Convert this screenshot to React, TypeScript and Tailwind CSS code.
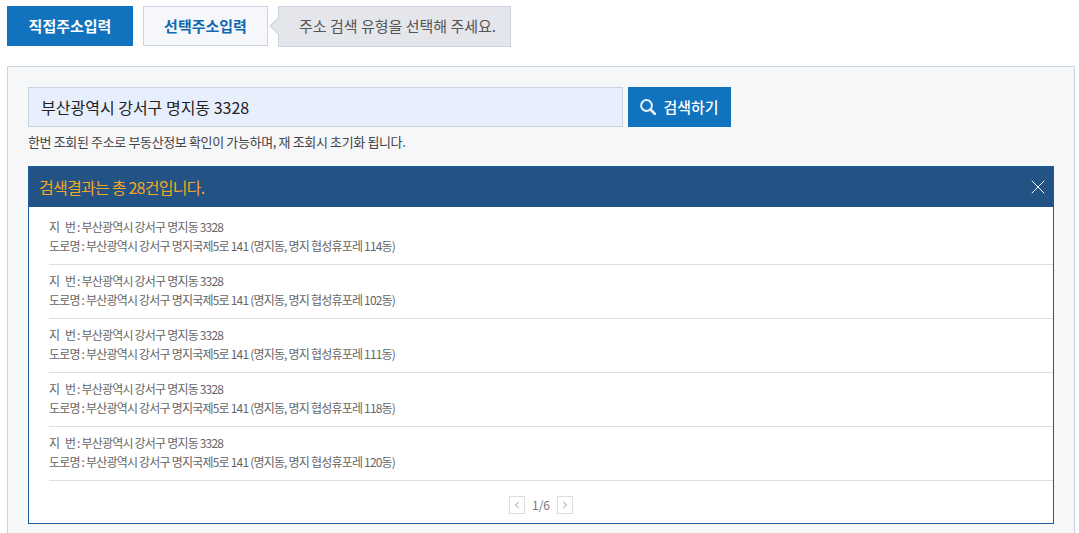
import { X, ChevronLeft, ChevronRight } from 'lucide-react';

const results = ['114', '102', '111', '118', '120'];

export default function App() {
  return (
    <div className="h-[533px] w-[1079px] overflow-hidden bg-white pl-[7px] pr-1 pt-[6px] font-['Noto_Sans_CJK_KR','Noto_Sans',sans-serif]">
      <div className="flex items-start">
        <button className="flex h-10 w-[126px] items-center justify-center bg-[#1172bd] text-[15px] font-bold text-white">
          직접주소입력
        </button>
        <button className="ml-[10px] flex h-10 w-[125px] items-center justify-center border border-[#ccd3e0] bg-[#f5f7fa] text-[15px] font-bold text-[#1168b0]">
          선택주소입력
        </button>
        <div className="relative ml-[10px] flex h-[41px] w-[233px] items-center border border-[#ccd3e0] bg-[#e4e6eb] pl-5 text-[15px] text-[#555]">
          주소 검색 유형을 선택해 주세요.
          <span className="absolute -left-[7px] top-[13px] h-3 w-3 rotate-45 border-b border-l border-[#ccd3e0] bg-[#e4e6eb]" />
        </div>
      </div>

      <div className="mt-[19px] h-[480px] border border-[#ccd3e0] bg-[#f5f7f9] px-5 pt-5">
        <div className="flex gap-[5px]">
          <div className="flex h-10 w-[595px] items-center border border-[#ccd3e0] bg-[#e8effc] pl-3 text-base text-[#222]">
            부산광역시 강서구 명지동 3328
          </div>
          <button className="flex h-10 w-[103px] items-center justify-center gap-[7px] bg-[#1172bd] text-[15px] font-medium text-white">
            <svg viewBox="0 0 16 16" className="h-4 w-4" fill="none" stroke="#e6f1fa">
              <circle cx="6.5" cy="6.5" r="5.4" strokeWidth="2" />
              <path d="M10.5 10.5L15 15" strokeWidth="2.6" strokeLinecap="round" />
            </svg>
            검색하기
          </button>
        </div>
        <p className="mt-[5px] text-[13px] leading-5 tracking-[-0.36px] text-[#444]">
          한번 조회된 주소로 부동산정보 확인이 가능하며, 재 조회시 초기화 됩니다.
        </p>

        <div className="mt-[14px] h-[358px] border border-[#1b5ba0] bg-white">
          <div className="flex h-10 items-center justify-between bg-[#235284] pl-[10px] pr-[3px]">
            <span className="text-base tracking-[-0.75px] text-[#f5a623]">검색결과는 총 28건입니다.</span>
            <X className="h-6 w-6 text-white" strokeWidth={1} />
          </div>
          <ul className="pl-5 pt-1">
            {results.map((dong) => (
              <li key={dong} className="h-[54px] border-b border-[#e0e0e0] pt-[6px] text-xs leading-[19px] tracking-[-0.8px] text-[#666]">
                <p>지&nbsp;&nbsp;&nbsp;번 : 부산광역시 강서구 명지동 3328</p>
                <p>도로명 : 부산광역시 강서구 명지국제5로 141 (명지동, 명지 협성휴포레 {dong}동)</p>
              </li>
            ))}
          </ul>
          <div className="mt-[15px] flex items-center justify-center gap-[7px] text-xs text-[#777]">
            <span className="flex h-[18px] w-4 items-center justify-center border border-[#ddd]">
              <ChevronLeft className="h-3 w-3 text-[#999]" />
            </span>
            <span>1/6</span>
            <span className="flex h-[18px] w-4 items-center justify-center border border-[#ddd]">
              <ChevronRight className="h-3 w-3 text-[#999]" />
            </span>
          </div>
        </div>
      </div>
    </div>
  );
}
